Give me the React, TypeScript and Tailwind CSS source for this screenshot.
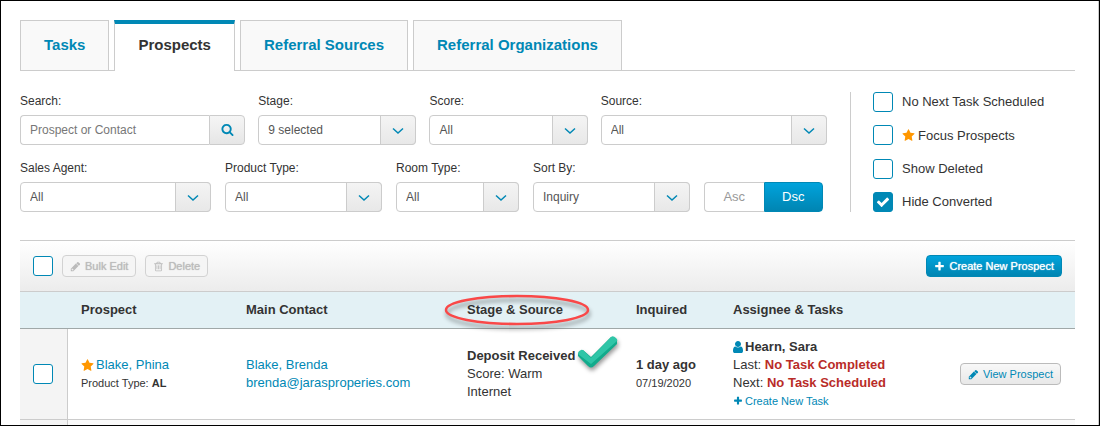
import type { ReactNode, SVGProps } from "react";

const icons = {
  star: "M1728 647q0 22-26 48l-363 354 86 500q1 7 1 20 0 21-10.5 35.5t-30.5 14.5q-19 0-40-12l-449-236-449 236q-22 12-40 12-21 0-31.5-14.5t-10.5-35.5q0-6 2-20l86-500-364-354q-25-27-25-48 0-37 56-46l502-73 225-455q19-41 49-41t49 41l225 455 502 73q56 9 56 46z",
  plus: "M1600 736v192q0 40-28 68t-68 28h-416v416q0 40-28 68t-68 28h-192q-40 0-68-28t-28-68v-416h-416q-40 0-68-28t-28-68v-192q0-40 28-68t68-28h416v-416q0-40 28-68t68-28h192q40 0 68 28t28 68v416h416q40 0 68 28t28 68z",
  check: "M1671 566q0 40-28 68l-724 724-136 136q-28 28-68 28t-68-28l-136-136-362-362q-28-28-28-68t28-68l136-136q28-28 68-28t68 28l294 295 656-657q28-28 68-28t68 28l136 136q28 28 28 68z",
  pencil: "M491 1536l91-91-235-235-91 91v107h128v128h107zm469-1120l416 416-832 832h-416v-416zm683 96q0 53-37 90l-166 166-416-416 166-165q36-38 90-38 53 0 91 38l235 234q37 39 37 91z",
  search: "M1216 832q0-185-131.5-316.5t-316.5-131.5-316.5 131.5-131.5 316.5 131.5 316.5 316.5 131.5 316.5-131.5 131.5-316.5zm512 832q0 52-38 90t-90 38q-54 0-90-38l-343-342q-179 124-399 124-143 0-273.5-55.5t-225-150-150-225-55.5-273.5 55.5-273.5 150-225 225-150 273.5-55.5 273.5 55.5 225 150 150 225 55.5 273.5q0 220-124 399l343 343q37 37 37 90z",
  trash: "M704 736v576q0 14-9 23t-23 9h-64q-14 0-23-9t-9-23v-576q0-14 9-23t23-9h64q14 0 23 9t9 23zm256 0v576q0 14-9 23t-23 9h-64q-14 0-23-9t-9-23v-576q0-14 9-23t23-9h64q14 0 23 9t9 23zm256 0v576q0 14-9 23t-23 9h-64q-14 0-23-9t-9-23v-576q0-14 9-23t23-9h64q14 0 23 9t9 23zm128 724v-948h-896v948q0 22 7 40.5t14.5 27 10.5 8.5h832q3 0 10.5-8.5t14.5-27 7-40.5zm-672-1076h448l-48-117q-7-9-17-11h-317q-10 2-17 11zm928 32v64q0 14-9 23t-23 9h-96v948q0 83-47 143.5t-113 60.5h-832q-66 0-113-58.5t-47-141.5v-952h-96q-14 0-23-9t-9-23v-64q0-14 9-23t23-9h309l70-167q15-37 54-63t79-26h320q40 0 79 26t54 63l70 167h309q14 0 23 9t9 23z",
  user: "M1536 1399q0 109-62.5 187t-150.5 78h-854q-88 0-150.5-78t-62.5-187q0-85 8.5-160.5t31.5-152 58.5-131 94-89 134.5-34.5q131 128 313 128t313-128q76 0 134.5 34.5t94 89 58.5 131 31.5 152 8.5 160.5zm-256-887q0 159-112.5 271.5t-271.5 112.5-271.5-112.5-112.5-271.5 112.5-271.5 271.5-112.5 271.5 112.5 112.5 271.5z",
};

interface IconProps extends SVGProps<SVGSVGElement> {
  name: keyof typeof icons;
}

function Icon({ name, className = "size-[11px]", ...rest }: IconProps) {
  return (
    <svg viewBox="0 0 1792 1792" fill="currentColor" aria-hidden="true" className={className} {...rest}>
      <path d={icons[name]} />
    </svg>
  );
}

function Checkbox({ id, label, checked = false }: { id: string; label?: string; checked?: boolean }) {
  return (
    <span className="relative block size-5 shrink-0">
      <input
        id={id}
        type="checkbox"
        defaultChecked={checked}
        aria-label={label}
        className="peer block size-5 appearance-none rounded-[3px] border border-[#0088b5] bg-white checked:bg-[#0088b5]"
      />
      <Icon
        name="check"
        className="pointer-events-none absolute inset-0 m-auto hidden size-[14px] text-white peer-checked:block"
      />
    </span>
  );
}

function Field({ id, label, children }: { id: string; label: string; children: ReactNode }) {
  return (
    <div className="flex min-w-0 flex-col gap-[5px]">
      <label htmlFor={id} className="leading-[18px] whitespace-nowrap">
        {label}
      </label>
      {children}
    </div>
  );
}

function SelectField({ id, label, value }: { id: string; label: string; value: string }) {
  return (
    <Field id={id} label={label}>
      <div className="relative">
        <select
          id={id}
          className="block h-[30px] w-full appearance-none rounded-[4px] border border-[#ccc] bg-white pr-10 pb-px pl-[9px] text-[#555]"
        >
          <option>{value}</option>
        </select>
        <span className="pointer-events-none absolute inset-y-0 right-0 flex w-9 items-center justify-center rounded-r-[4px] border border-[#ccc] bg-linear-to-b from-[#f4f4f4] to-[#e8e8e8]">
          <svg viewBox="0 0 12 8" className="mt-px h-2 w-3" fill="none" stroke="#0088b5" strokeWidth="1.5">
            <path d="M1 1.5 6 6l5-4.5" />
          </svg>
        </span>
      </div>
    </Field>
  );
}

const tabs = ["Tasks", "Prospects", "Referral Sources", "Referral Organizations"];

const toggles = [
  { id: "no-next-task", label: "No Next Task Scheduled" },
  { id: "focus", label: "Focus Prospects", star: true },
  { id: "show-deleted", label: "Show Deleted" },
  { id: "hide-converted", label: "Hide Converted", checked: true },
];

const smallButton =
  "flex h-[22px] items-center gap-1 rounded-[4px] border px-[7px] text-[11px] whitespace-nowrap";
const disabledButton =
  "ml-[9px] border-[#d2d2d2] bg-[#f5f5f5] text-[#bbb] [text-shadow:0_0_1px_currentColor]";

export default function App() {
  return (
    <div className="h-screen overflow-hidden border border-black bg-white font-['Liberation_Sans',Arial,sans-serif] text-[12px] text-[#333]">
      <main className="min-h-full border-r border-[#ccc] pt-[19px] pr-[23px] pl-[19px]">
        {/* Tabs */}
        <nav className="flex gap-[5px] border-b border-[#ccc] text-[15px] font-bold">
          {tabs.map((tab) => (
            <a
              key={tab}
              href="#"
              className={
                tab === "Prospects"
                  ? "-mb-px flex h-[51px] items-center border-x border-t-4 border-x-[#ccc] border-t-[#0088b5] bg-white px-[23px] pb-[5px]"
                  : "flex h-[50px] items-center border border-b-0 border-[#ccc] bg-[#f9f9f9] px-[23px] text-[#0088b5]"
              }
            >
              {tab}
            </a>
          ))}
        </nav>

        {/* Filters */}
        <section className="mt-[21px] flex">
          <div className="flex min-w-0 flex-1 flex-col gap-[14px]">
            <div className="grid grid-cols-[225fr_158fr_158fr_226fr] gap-[13px]">
              <Field id="search" label="Search:">
                <div className="flex">
                  <input
                    id="search"
                    type="text"
                    placeholder="Prospect or Contact"
                    className="h-[30px] min-w-0 flex-1 rounded-l-[4px] border border-r-0 border-[#ccc] pb-px pl-[9px] placeholder:text-[#777]"
                  />
                  <button
                    type="button"
                    aria-label="Search"
                    className="flex h-[30px] w-9 items-center justify-center rounded-r-[4px] border border-[#ccc] bg-linear-to-b from-[#f5f5f5] to-[#e6e6e6] pb-0.5 text-[#0088b5]"
                  >
                    <Icon name="search" className="size-[13px]" />
                  </button>
                </div>
              </Field>
              <SelectField id="stage" label="Stage:" value="9 selected" />
              <SelectField id="score" label="Score:" value="All" />
              <SelectField id="source" label="Source:" value="All" />
            </div>
            <div className="grid grid-cols-[191fr_157fr_123fr_157fr_119fr] items-end gap-[14px] pr-1">
              <SelectField id="agent" label="Sales Agent:" value="All" />
              <SelectField id="product" label="Product Type:" value="All" />
              <SelectField id="room" label="Room Type:" value="All" />
              <SelectField id="sort" label="Sort By:" value="Inquiry" />
              <div className="grid h-[30px] grid-cols-2 text-[13px]">
                <button type="button" className="rounded-l-[4px] border border-r-0 border-[#ccc] bg-white text-[#999]">
                  Asc
                </button>
                <button
                  type="button"
                  className="rounded-r-[4px] border border-[#0088b5] bg-linear-to-b from-[#00a3dc] to-[#0085b2] text-white"
                >
                  Dsc
                </button>
              </div>
            </div>
          </div>

          <div className="ml-[23px] flex w-[225px] flex-col justify-between border-l border-[#ccc] pl-[22px] text-[13px]">
            {toggles.map((toggle) => (
              <div key={toggle.id} className="flex items-center">
                <Checkbox id={toggle.id} checked={toggle.checked} />
                <label htmlFor={toggle.id} className="flex items-center gap-[3px] pl-[9px] whitespace-nowrap">
                  {toggle.star && <Icon name="star" className="size-[13px] text-[#ff9700]" />}
                  {toggle.label}
                </label>
              </div>
            ))}
          </div>
        </section>

        {/* Table toolbar */}
        <div className="mt-7 flex h-[52px] items-center border-y border-[#ccc] bg-linear-to-b from-white to-[#ececec] px-[13px]">
          <Checkbox id="select-all" label="Select all prospects" />
          <button type="button" disabled className={`${smallButton} ${disabledButton}`}>
            <Icon name="pencil" />
            Bulk Edit
          </button>
          <button type="button" disabled className={`${smallButton} ${disabledButton}`}>
            <Icon name="trash" />
            Delete
          </button>
          <button
            type="button"
            className={`${smallButton} ml-auto border-[#0088b5] bg-linear-to-b from-[#00a3dc] to-[#0085b2] text-white [text-shadow:0_0_1px_currentColor]`}
          >
            <Icon name="plus" />
            Create New Prospect
          </button>
        </div>

        {/* Prospects */}
        <table className="w-full table-fixed border-separate border-spacing-0 text-left text-[13px] leading-[18px]">
          <colgroup>
            <col className="w-12" />
            <col className="w-[164px]" />
            <col className="w-[221px]" />
            <col className="w-[169px]" />
            <col className="w-[97px]" />
            <col />
            <col className="w-[128px]" />
          </colgroup>
          <thead>
            <tr className="h-[37px] bg-[#e3f1f5] *:border-b *:border-[#a0a8a8] *:pl-[14px]">
              <th aria-label="Select" />
              <th className="pl-[13px]!">Prospect</th>
              <th>Main Contact</th>
              <th>
                <span className="relative inline-block">
                  Stage &amp; Source
                  <svg
                    viewBox="0 0 152 44"
                    fill="none"
                    aria-hidden="true"
                    className="absolute -top-[9px] -left-[25px] h-11 w-[152px] max-w-none drop-shadow-[1px_4px_2px_rgba(0,0,0,0.4)]"
                  >
                    <ellipse cx="75" cy="18" rx="71" ry="14" stroke="#f94848" strokeWidth="2.5" />
                  </svg>
                </span>
              </th>
              <th>Inquired</th>
              <th>Assignee &amp; Tasks</th>
              <th aria-label="Actions" />
            </tr>
          </thead>
          <tbody>
            <tr className="h-[91px] *:border-b *:border-[#ccc] *:pl-[14px]">
              <td className="border-r bg-[#f4f4f4] pl-[13px]!">
                <Checkbox id="select-blake" label="Select Blake, Phina" />
              </td>
              <td className="pl-[13px]!">
                <div className="flex items-center gap-0.5">
                  <Icon name="star" className="size-[13px] text-[#ff9700]" />
                  <a href="#" className="text-[#0088b5]">Blake, Phina</a>
                </div>
                <div className="text-[11px]">
                  Product Type: <b>AL</b>
                </div>
              </td>
              <td className="text-[#0088b5]">
                <a href="#" className="block">Blake, Brenda</a>
                <a href="#" className="block">brenda@jarasproperies.com</a>
              </td>
              <td>
                <div className="relative w-fit font-bold whitespace-nowrap">
                  Deposit Received
                  <svg
                    viewBox="0 0 44 40"
                    aria-hidden="true"
                    className="absolute -top-[13px] left-full ml-px h-10 w-11 max-w-none drop-shadow-[1px_3px_2px_rgba(0,0,0,0.4)]"
                  >
                    <path d="M2 19 7 16 15 23 35 3 41 6V10L18 32Q15 35 12 32L2 22Z" fill="#12ab8c" />
                    <path d="M2 20Q2 17 5 16 6 15 8 17L15 24 35 3Q37 1 40 4 42 6 41 7L15 30Z" fill="#2fc5a7" />
                  </svg>
                </div>
                <div>Score: Warm</div>
                <div>Internet</div>
              </td>
              <td>
                <div className="font-bold">1 day ago</div>
                <div className="text-[11px]">07/19/2020</div>
              </td>
              <td className="whitespace-nowrap">
                <div className="flex items-center font-bold">
                  <Icon name="user" className="-ml-0.5 size-[14px] text-[#0088b5]" />
                  Hearn, Sara
                </div>
                <div>
                  Last: <b className="text-[#b92c28]">No Task Completed</b>
                </div>
                <div>
                  Next: <b className="text-[#b92c28]">No Task Scheduled</b>
                </div>
                <a href="#" className="flex items-center gap-0.5 text-[11px] text-[#0088b5]">
                  <Icon name="plus" className="size-[10px]" />
                  Create New Task
                </a>
              </td>
              <td className="pr-[14px] pl-0!">
                <button
                  type="button"
                  className={`${smallButton} ml-auto border-[#bbb] bg-linear-to-b from-[#f8f8f8] to-[#e8e8e8] text-[#0088b5]`}
                >
                  <Icon name="pencil" />
                  View Prospect
                </button>
              </td>
            </tr>
            <tr className="h-[91px] bg-[#fafafa]">
              <td className="border-r border-[#ccc] bg-[#f4f4f4]" />
              <td colSpan={6} />
            </tr>
          </tbody>
        </table>
      </main>
    </div>
  );
}
